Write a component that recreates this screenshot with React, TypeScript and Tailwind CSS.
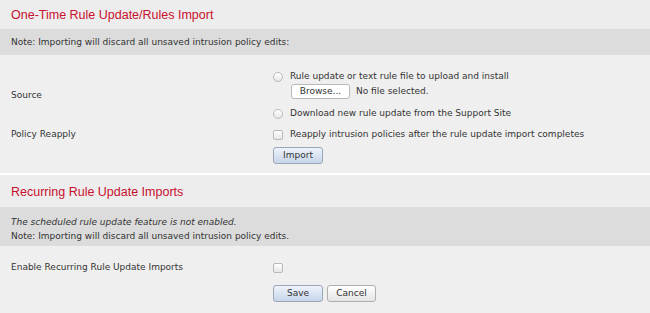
import React from "react";

function Radio() {
  return (
    <span className="inline-block w-[10px] h-[10px] rounded-full border border-[#b9b9b9] bg-gradient-to-b from-[#ffffff] to-[#e6e6e6] shrink-0" />
  );
}

function Check() {
  return (
    <span className="inline-block w-[10px] h-[10px] rounded-[2px] border border-[#b9b9b9] bg-gradient-to-b from-[#ffffff] to-[#e6e6e6] shrink-0" />
  );
}

export default function App() {
  return (
    <div className="w-[650px] h-[313px] bg-[#efefef] text-[#333] font-['DejaVu_Sans',sans-serif] text-[9px] overflow-hidden">
      {/* Section 1 */}
      <div className="h-[29px] bg-[#ededed] px-[11px] pt-[2px] flex items-center text-[#c8102e] text-[12.5px] font-['Liberation_Sans',sans-serif]">
        One-Time Rule Update/Rules Import
      </div>
      <div className="h-[26px] bg-[#dcdcdc] px-[11px] pt-[1px] flex items-center">
        Note: Importing will discard all unsaved intrusion policy edits:
      </div>
      <div className="pt-[15px] pb-[9px] pl-[11px]">
        <div className="flex">
          <div className="w-[262px] flex items-center">Source</div>
          <div className="flex flex-col">
            <div className="flex items-center h-[14px]">
              <Radio />
              <span className="ml-[7px]">Rule update or text rule file to upload and install</span>
            </div>
            <div className="flex items-center ml-[18px] h-[15px]">
              <button className="h-[15px] w-[59px] bg-white border border-[#b9b9b9] rounded-[3px] text-[9px] leading-none">
                Browse...
              </button>
              <span className="ml-[6px]">No file selected.</span>
            </div>
            <div className="flex items-center h-[14px] mt-[8px]">
              <Radio />
              <span className="ml-[7px]">Download new rule update from the Support Site</span>
            </div>
          </div>
        </div>
        <div className="flex items-center h-[14px] mt-[7px]">
          <div className="w-[262px]">Policy Reapply</div>
          <Check />
          <span className="ml-[7px]">Reapply intrusion policies after the rule update import completes</span>
        </div>
        <div className="ml-[262px] mt-[5px] h-[17px] flex">
          <button className="h-[17px] w-[50px] bg-gradient-to-b from-[#eef3fb] to-[#c7d5ea] border border-[#9aa6b8] rounded-[3px] text-[9px] leading-none">
            Import
          </button>
        </div>
      </div>
      <div className="h-[2px] bg-white" />
      {/* Section 2 */}
      <div className="h-[32px] bg-[#ededed] px-[11px] pt-[3px] flex items-center text-[#c8102e] text-[12.5px] font-['Liberation_Sans',sans-serif]">
        Recurring Rule Update Imports
      </div>
      <div className="h-[39px] bg-[#dcdcdc] px-[11px] pt-[8px] leading-[14px]">
        <div className="italic">The scheduled rule update feature is not enabled.</div>
        <div>Note: Importing will discard all unsaved intrusion policy edits.</div>
      </div>
      <div className="pl-[11px] pt-[15px]">
        <div className="flex items-center h-[14px]">
          <div className="w-[262px]">Enable Recurring Rule Update Imports</div>
          <Check />
        </div>
        <div className="flex ml-[262px] mt-[10px] gap-[4px]">
          <button className="h-[17px] w-[50px] bg-gradient-to-b from-[#eef3fb] to-[#c7d5ea] border border-[#9aa6b8] rounded-[3px] text-[9px] leading-none">
            Save
          </button>
          <button className="h-[17px] w-[49px] bg-gradient-to-b from-[#ffffff] to-[#e4e4e4] border border-[#b0b0b0] rounded-[3px] text-[9px] leading-none">
            Cancel
          </button>
        </div>
      </div>
    </div>
  );
}
